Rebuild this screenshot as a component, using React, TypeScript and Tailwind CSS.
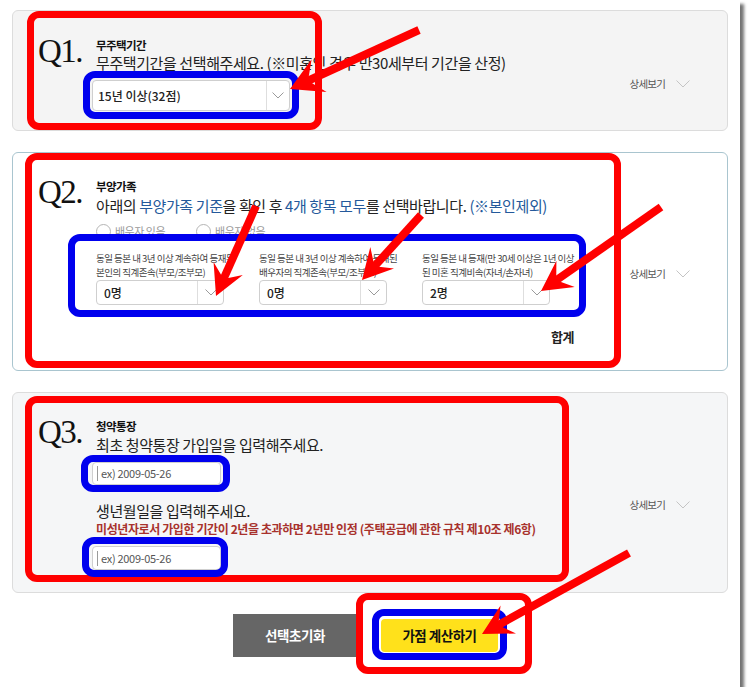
import React from 'react';

const KR = "font-['Noto_Sans_CJK_KR','Noto_Sans',sans-serif]";

const Chevron = ({ className = '' }: { className?: string }) => (
  <svg width="14" height="8" viewBox="0 0 14 8" className={className}>
    <polyline points="0.5,0.5 7,7 13.5,0.5" fill="none" stroke="#c4c4c4" strokeWidth="1" />
  </svg>
);

const SmallChevron = () => (
  <svg width="12" height="7" viewBox="0 0 12 7">
    <polyline points="0.5,0.5 6,6 11.5,0.5" fill="none" stroke="#9a9a9a" strokeWidth="1" />
  </svg>
);

const Detail = () => (
  <div className="self-center flex items-center gap-[11px]">
    <span className="text-[10.5px] tracking-[-0.8px] text-[#555]">상세보기</span>
    <Chevron />
  </div>
);

const QNum = ({ n }: { n: string }) => (
  <div className="w-[58px] shrink-0 -mt-[2px] font-['Liberation_Serif',serif] text-[33px] leading-none tracking-[-1.5px] text-[#111]">
    {n}
  </div>
);

const Select = ({ value, w, h, pl, chev }: { value: string; w: string; h: string; pl: string; chev: string }) => (
  <div className={`flex ${w} ${h} items-stretch rounded-[4px] border border-[#cfcfcf] bg-white`}>
    <div className={`flex flex-1 items-center ${pl} text-[12px] font-medium text-[#222]`}>{value}</div>
    <div className={`flex ${chev} items-center justify-center border-l border-[#dedede]`}>
      <SmallChevron />
    </div>
  </div>
);

const DateInput = ({ h }: { h: string }) => (
  <div className={`-ml-[4px] flex w-[129px] ${h} items-center rounded-[4px] border border-[#cfcfcf] bg-white pl-[4px]`}>
    <span className="mr-[3px] h-[15px] w-px bg-[#9a9a9a]" />
    <span className="text-[11px] tracking-[-0.3px] text-[#555]">ex) 2009-05-26</span>
  </div>
);

function Arrow({ x1, y1, x2, y2, L = 30, W = 16 }: { x1: number; y1: number; x2: number; y2: number; L?: number; W?: number }) {
  const dx = x2 - x1;
  const dy = y2 - y1;
  const len = Math.hypot(dx, dy);
  const ux = dx / len;
  const uy = dy / len;
  const nx = -uy;
  const ny = ux;
  const bx = x2 - ux * L;
  const by = y2 - uy * L;
  const kx = x2 - ux * L * 0.62;
  const ky = y2 - uy * L * 0.62;
  const pts = [
    [x2, y2],
    [bx + nx * W, by + ny * W],
    [kx, ky],
    [bx - nx * W, by - ny * W],
  ]
    .map((p) => p.join(','))
    .join(' ');
  return (
    <g>
      <line x1={x1} y1={y1} x2={kx + ux * 3} y2={ky + uy * 3} stroke="#ff0000" strokeWidth="8" />
      <polygon points={pts} fill="#ff0000" />
    </g>
  );
}

const Frame = ({ c, className }: { c: 'r' | 'b'; className: string }) => (
  <div
    className={`absolute rounded-[12px] border-[7px] ${c === 'r' ? 'border-[#ff0000]' : 'border-[#0000ee]'} ${className}`}
  />
);

const Q_TEXT = 'text-[15px] leading-[20px] tracking-[-0.4px] text-[#222]';

export default function App() {
  return (
    <div className="bg-white p-0">
      <div className={`relative h-[687px] w-[740px] bg-white px-[12px] pt-[10px] shadow-[4px_4px_3px_rgba(0,0,0,0.55)] ${KR}`}>
        {/* Q1 */}
        <section className="flex h-[121px] items-start rounded-[6px] border border-[#dcdcdc] bg-[#f4f4f4] pl-[25px] pr-[37px] pt-[26px]">
          <QNum n="Q1." />
          <div className="flex-1">
            <div className="text-[11.5px] font-bold leading-[16px] tracking-[-0.6px] text-[#111]">무주택기간</div>
            <div className={Q_TEXT}>무주택기간을 선택해주세요. (※미혼인 경우 만30세부터 기간을 산정)</div>
            <div className="-ml-[4px] mt-[7px]">
              <Select value="15년 이상(32점)" w="w-[198px]" h="h-[31px]" pl="pl-[5px]" chev="w-[23px]" />
            </div>
          </div>
          <Detail />
        </section>

        {/* Q2 */}
        <section className="mt-[21px] flex h-[219px] items-start rounded-[6px] border border-[#a9c5cf] bg-white pl-[25px] pr-[37px] pt-[25px]">
          <QNum n="Q2." />
          <div className="flex-1">
            <div className="text-[11.5px] font-bold leading-[16px] tracking-[-0.6px] text-[#111]">부양가족</div>
            <div className={`mt-[2px] ${Q_TEXT}`}>
              아래의 <span className="text-[#24599b]">부양가족 기준</span>을 확인 후{' '}
              <span className="text-[#24599b]">4개 항목 모두</span>를 선택바랍니다.{' '}
              <span className="text-[#24599b]">(※본인제외)</span>
            </div>
            <div className="mt-[7px] flex h-[16px] items-center text-[11px] tracking-[-0.5px] text-[#999]">
              <span className="mr-[4px] h-[15px] w-[15px] rounded-full border border-[#b5b5b5] bg-white" />
              <span>배우자 있음</span>
              <span className="ml-[31px] mr-[4px] h-[15px] w-[15px] rounded-full border border-[#b5b5b5] bg-white" />
              <span>배우자 없음</span>
            </div>
            <div className="mt-[12px] grid grid-cols-[128px_128px_128px] gap-x-[35px]">
              {[
                ['동일 등본 내 3년 이상 계속하여 등재된', '본인의 직계존속(부모/조부모)', '0명'],
                ['동일 등본 내 3년 이상 계속하여 등재된', '배우자의 직계존속(부모/조부모)', '0명'],
                ['동일 등본 내 등재(만 30세 이상은 1년 이상', '된 미혼 직계비속(자녀/손자녀)', '2명'],
              ].map(([a, b, v], i) => (
                <div key={i}>
                  <div className="whitespace-nowrap text-[9.5px] leading-[14px] tracking-[-0.5px] text-[#444]">{a}</div>
                  <div className="whitespace-nowrap text-[9.5px] leading-[14px] tracking-[-0.5px] text-[#444]">{b}</div>
                  <div className="mt-[1px]">
                    <Select value={v} w="w-[128px]" h="h-[25px]" pl="pl-[7px]" chev="w-[26px]" />
                  </div>
                </div>
              ))}
            </div>
            <div className="mt-[22px] flex w-[478px] justify-end text-[13px] font-bold leading-[20px] tracking-[-0.5px] text-[#222]">
              합계
            </div>
          </div>
          <Detail />
        </section>

        {/* Q3 */}
        <section className="mt-[21px] flex h-[201px] items-start rounded-[6px] border border-[#dcdcdc] bg-[#f5f6f7] pl-[25px] pr-[37px] pt-[25px]">
          <QNum n="Q3." />
          <div className="flex-1">
            <div className="text-[11.5px] font-bold leading-[16px] tracking-[-0.6px] text-[#111]">청약통장</div>
            <div className={`mt-[1px] ${Q_TEXT}`}>최초 청약통장 가입일을 입력해주세요.</div>
            <div className="mt-[7px]">
              <DateInput h="h-[23px]" />
            </div>
            <div className={`mt-[16px] ${Q_TEXT}`}>생년월일을 입력해주세요.</div>
            <div className="text-[12px] font-bold leading-[16px] tracking-[-0.4px] text-[#a8322d]">
              미성년자로서 가입한 기간이 2년을 초과하면 2년만 인정 (주택공급에 관한 규칙 제10조 제6항)
            </div>
            <div className="mt-[9px]">
              <DateInput h="h-[24px]" />
            </div>
          </div>
          <Detail />
        </section>

        {/* buttons */}
        <div className="mt-[21px] flex items-center pl-[221px]">
          <button className="h-[43px] w-[124px] bg-[#666666] text-[13.5px] font-bold tracking-[-0.4px] text-white">
            선택초기화
          </button>
          <button className="ml-[24px] h-[33px] w-[117px] rounded-[4px] bg-[#ffe11b] text-[13.5px] font-bold tracking-[-0.5px] text-[#111]">
            가점 계산하기
          </button>
        </div>

        {/* annotations */}
        <div className="pointer-events-none absolute inset-0 z-10">
          <Frame c="r" className="left-[27px] top-[11px] h-[119px] w-[295px]" />
          <Frame c="b" className="left-[83px] top-[71px] h-[48px] w-[216px]" />
          <Frame c="r" className="left-[25px] top-[153px] h-[215px] w-[596px]" />
          <Frame c="b" className="left-[68px] top-[234px] h-[83px] w-[518px]" />
          <Frame c="r" className="left-[25px] top-[396px] h-[186px] w-[544px]" />
          <Frame c="b" className="left-[81px] top-[455px] h-[37px] w-[149px]" />
          <Frame c="b" className="left-[82px] top-[537px] h-[40px] w-[146px]" />
          <Frame c="r" className="left-[356px] top-[593px] h-[81px] w-[176px]" />
          <Frame c="b" className="left-[372px] top-[609px] h-[51px] w-[135px]" />
          <svg width="740" height="687" className="absolute left-0 top-0">
            <Arrow x1={419} y1={30} x2={290} y2={89} L={32} W={18} />
            <Arrow x1={256} y1={206} x2={216} y2={296} />
            <Arrow x1={421} y1={215} x2={362} y2={280} />
            <Arrow x1={661} y1={207} x2={541} y2={291} />
            <Arrow x1={629} y1={553} x2={482} y2={634} />
          </svg>
        </div>
      </div>
    </div>
  );
}
